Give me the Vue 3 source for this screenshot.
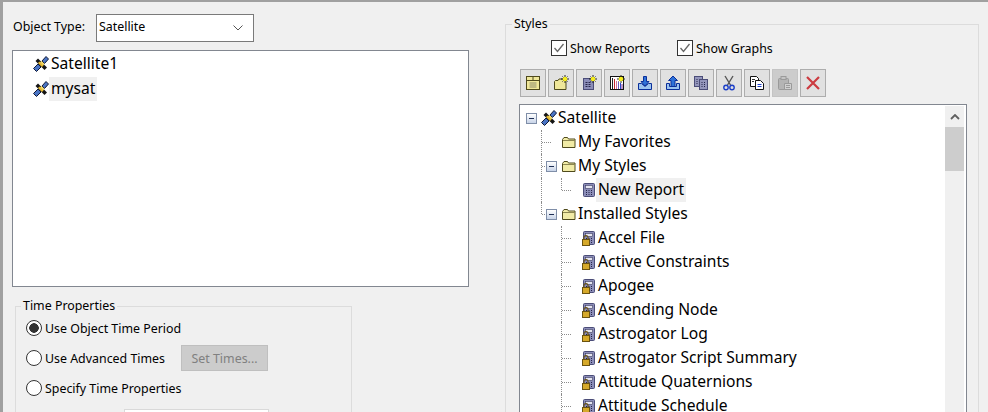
<template>
  <div class="screen">
    <svg class="sprites" aria-hidden="true">
      <defs>
        <symbol id="sat" viewBox="0 0 16 16">
          <path d="M.5 12.500L5 8l3 3-4.500 4.500z" fill="#4a74c4" stroke="#0e1836" stroke-width="1" />
          <path d="M9 5L13 .5l2.500 2.500L11.500 7.500z" fill="#4a74c4" stroke="#0e1836" stroke-width="1" />
          <path d="M5 2.500l9 9-2.500 2.500-9-9z" fill="#141414" />
          <path d="M6.500 5.500l4 4-1.500 1.500-4-4z" fill="#e6b82c" />
          <path d="M8.500 5l3 3-1.500 1.500-3-3z" fill="#f4d860" />
        </symbol>
        <symbol id="folder" viewBox="0 0 16 16">
          <path d="M1.500 13.500v-8l1.500-2h3.500l1 1.500h6.500v8.500z" fill="#f1eba6" stroke="#4f4a1c" />
          <path d="M2 6.500h12" stroke="#8c8650" />
        </symbol>
        <symbol id="report" viewBox="0 0 16 16">
          <rect x="2.500" y="1.500" width="11" height="13" rx="1" fill="#8b8db8" stroke="#4b4d78" />
          <rect x="4.500" y="3.500" width="7" height="3" fill="#e4e4f0" stroke="#3c3c60" stroke-width=".6" />
          <path d="M5 8.500h1M7.500 8.500h1M10 8.500h1M5 10.500h1M7.500 10.500h1M10 10.500h1M5 12.500h1M7.500 12.500h1M10 12.500h1" stroke="#26264a" />
        </symbol>
        <symbol id="locked" viewBox="0 0 16 16">
          <use href="#report" />
          <rect x="1.500" y="9.500" width="7" height="6" fill="#d6a92a" stroke="#6b5310" stroke-width="1" />
          <path d="M3 9.500V7.500a2 2 0 0 1 4 0V9.500" fill="none" stroke="#6b5310" stroke-width="1.100" />
        </symbol>
        <symbol id="star" viewBox="0 0 16 16">
          <path d="M12 0v8M8 4h8M9.500 1.500l5 5M14.500 1.500l-5 5" stroke="#111" stroke-width=".9" />
          <circle cx="12" cy="4" r="2.300" fill="#f6ee1e" />
        </symbol>
        <symbol id="t-note" viewBox="0 0 16 16">
          <rect x="1.500" y="1.500" width="13" height="13" fill="#efe79a" stroke="#4f4a1c" />
          <path d="M1.500 5.500h13M8 1.500v4" stroke="#4f4a1c" />
          <path d="M4.500 8h7M4.500 10h7M4.500 12h7" stroke="#8d8a6a" />
        </symbol>
        <symbol id="t-folder" viewBox="0 0 16 16">
          <path d="M1.500 14.500v-8l1-1h2.500l1-1.500h7v10.500z" fill="#efe79a" stroke="#4f4a1c" />
          <use href="#star" />
        </symbol>
        <symbol id="t-report" viewBox="0 0 16 16">
          <rect x="2.500" y="3.500" width="10" height="11" fill="#8b8db8" stroke="#4b4d78" />
          <path d="M4.500 7.500h2M7.500 7.500h2M4.500 9.500h2M7.500 9.500h2M4.500 11.500h2M7.500 11.500h2" stroke="#26264a" />
          <use href="#star" />
        </symbol>
        <symbol id="t-graph" viewBox="0 0 16 16">
          <rect x="1.500" y="1.500" width="13" height="13" fill="#fff" stroke="#111" />
          <path d="M3.500 3v11" stroke="#222" />
          <path d="M5.500 4v10" stroke="#c2262e" />
          <path d="M7.500 6v8" stroke="#d0709a" />
          <path d="M9.500 7v7" stroke="#6a5fc0" />
          <path d="M11.500 8v6" stroke="#2a46c8" />
          <path d="M13 9v5" stroke="#7a2a90" />
          <use href="#star" />
        </symbol>
        <symbol id="t-in" viewBox="0 0 16 16">
          <path d="M1.500 8.500h3l3.500 3 3.500-3h3v6h-13z" fill="#9cc3ee" stroke="#0b2f9a" />
          <path d="M6.500 1.500h3v5h2.500l-4 4.500-4-4.500h2.500z" fill="#2f72d8" stroke="#0b2f9a" />
        </symbol>
        <symbol id="t-out" viewBox="0 0 16 16">
          <path d="M1.500 8.500h3v3h7v-3h3v6h-13z" fill="#9cc3ee" stroke="#0b2f9a" />
          <path d="M8 1l4.500 4.500H10v6H6v-6H3.500z" fill="#2f72d8" stroke="#0b2f9a" />
        </symbol>
        <symbol id="t-dup" viewBox="0 0 16 16">
          <rect x="1.500" y="1.500" width="8" height="10" fill="#9496bc" stroke="#4b4d78" />
          <rect x="6.500" y="4.500" width="8" height="10" fill="#9496bc" stroke="#4b4d78" />
          <path d="M8.500 7.500h1M11 7.500h1M8.500 9.500h1M11 9.500h1M8.500 11.500h1M11 11.500h1M3.500 4.500h1M3.500 6.500h1M3.500 8.500h1" stroke="#26264a" />
        </symbol>
        <symbol id="t-cut" viewBox="0 0 16 16">
          <path d="M4 1l5.500 9M12 1l-5.500 9" stroke="#555" stroke-width="1.400" fill="none" />
          <circle cx="5" cy="12.500" r="2.200" fill="none" stroke="#1c3fc8" stroke-width="1.400" />
          <circle cx="11" cy="12.500" r="2.200" fill="none" stroke="#1c3fc8" stroke-width="1.400" />
        </symbol>
        <symbol id="t-copy" viewBox="0 0 16 16">
          <path d="M1.500 1.500h6l2 2v8h-8z" fill="#fff" stroke="#111" />
          <path d="M6.500 5.500h5l3 3v6h-8z" fill="#fff" stroke="#111" />
          <path d="M8.500 9.500h4M8.500 11.500h4" stroke="#1c3fc8" />
          <path d="M3 4.500h3M3 6.500h2" stroke="#333" />
        </symbol>
        <symbol id="t-paste" viewBox="0 0 16 16">
          <rect x="1.500" y="3.500" width="10" height="11" rx="1" fill="#b4b4b4" stroke="#9a9a9a" />
          <rect x="4" y="1.500" width="5" height="3" fill="#c4c4c4" stroke="#9a9a9a" />
          <path d="M7.500 8.500h7v6h-7z" fill="#d0d0d0" stroke="#9a9a9a" />
          <path d="M9 10.500h4M9 12.500h4" stroke="#9a9a9a" />
        </symbol>
        <symbol id="t-x" viewBox="0 0 16 16">
          <path d="M2 2l12 12M14 2L2 14" stroke="#cc3b40" stroke-width="2.200" />
        </symbol>
      </defs>
    </svg>

    <section class="left">
      <div class="type-row">
        <label class="type-label">Object Type:</label>
        <div class="select">
          <span>Satellite</span>
          <svg width="10" height="6" viewBox="0 0 10 6"><path d="M.5.500L5 5 9.500.500" fill="none" stroke="#555" /></svg>
        </div>
      </div>

      <ul class="objects">
        <li v-for="item in objects" :key="item.name">
          <svg class="ico"><use href="#sat" /></svg>
          <span class="name" :class="{ hover: item.hover }">{{ item.name }}</span>
        </li>
      </ul>

      <fieldset class="group time">
        <legend>Time Properties</legend>
        <div v-for="opt in timeOptions" :key="opt.label" class="radio-row">
          <span class="radio" :class="{ on: opt.on }"></span>
          <span>{{ opt.label }}</span>
          <button v-if="opt.button" type="button" class="set-times" disabled>{{ opt.button }}</button>
        </div>
        <div class="time-input"></div>
      </fieldset>
    </section>

    <fieldset class="group styles">
      <legend>Styles</legend>
      <div class="checks">
        <label v-for="c in checks" :key="c" class="check">
          <span class="box">
            <svg width="14" height="14" viewBox="0 0 14 14"><path d="M2.500 7l3 3.500 6-7.500" fill="none" stroke="#666" stroke-width="1.300" /></svg>
          </span>
          {{ c }}
        </label>
      </div>

      <div class="toolbar">
        <button v-for="t in tools" :key="t" type="button" class="tool" :class="{ off: t === 't-paste' }">
          <svg width="16" height="16"><use :href="'#' + t" /></svg>
        </button>
      </div>

      <div class="tree">
        <ul class="rows">
          <li v-for="row in rows" :key="row.label" class="row" :class="'d' + row.depth">
            <i v-for="x in row.pass" :key="x" class="pass" :class="'x' + x"></i>
            <i v-if="row.depth" class="elbow" :class="{ end: row.last }"></i>
            <span class="exp">
              <span v-if="row.open" class="minus"></span>
            </span>
            <svg class="ico"><use :href="'#' + row.icon" /></svg>
            <span class="name" :class="{ hover: row.hover }">{{ row.label }}</span>
          </li>
        </ul>
        <div class="scrollbar">
          <div class="arrow">
            <svg width="10" height="6" viewBox="0 0 10 6"><path d="M1 5l4-4 4 4" fill="none" stroke="#606060" stroke-width="1.800" /></svg>
          </div>
          <div class="thumb"></div>
        </div>
      </div>
    </fieldset>
  </div>
</template>

<script setup>
const objects = [
  { name: "Satellite1" },
  { name: "mysat", hover: true }
]

const timeOptions = [
  { label: "Use Object Time Period", on: true },
  { label: "Use Advanced Times", button: "Set Times..." },
  { label: "Specify Time Properties" }
]

const checks = ["Show Reports", "Show Graphs"]

const tools = [
  "t-note", "t-folder", "t-report", "t-graph", "t-in", "t-out",
  "t-dup", "t-cut", "t-copy", "t-paste", "t-x"
]

const installed = [
  "Accel File", "Active Constraints", "Apogee", "Ascending Node", "Astrogator Log",
  "Astrogator Script Summary", "Attitude Quaternions", "Attitude Schedule"
]

const rows = [
  { label: "Satellite", depth: 0, icon: "sat", open: true },
  { label: "My Favorites", depth: 1, icon: "folder" },
  { label: "My Styles", depth: 1, icon: "folder", open: true },
  { label: "New Report", depth: 2, icon: "report", last: true, hover: true, pass: [1] },
  { label: "Installed Styles", depth: 1, icon: "folder", open: true, last: true },
  ...installed.map((label) => ({ label, depth: 2, icon: "locked" }))
]
</script>

<style scoped>
.screen {
  display: flex;
  gap: 36px;
  height: 412px;
  box-sizing: border-box;
  overflow: hidden;
  padding: 12px 9px 0 9px;
  border-top: 2px solid #a0a0a0;
  border-left: 3px solid #a0a0a0;
  background: #f0f0f0;
  color: #000;
  font-family: "Noto Sans", sans-serif;
  font-size: 12.400px;
}
.sprites { position: absolute; width: 0; height: 0; }

.left { width: 457px; flex: none; }
.type-row { display: flex; align-items: center; height: 28px; padding-left: 1px; }
.type-label { width: 83px; padding-bottom: 3px; }
.select {
  display: flex;
  align-items: center;
  justify-content: space-between;
  box-sizing: border-box;
  width: 158px;
  height: 28px;
  padding: 0 10px 3px 2px;
  border: 1px solid #7a7a7a;
  background: #fff;
}
.select svg { margin-top: 3px; }

.objects {
  box-sizing: border-box;
  height: 237px;
  margin: 8px 0 0;
  padding: 0 0 0 20px;
  border: 1px solid #828790;
  background: #fff;
  list-style: none;
  font-size: 15.600px;
}
.objects li { display: flex; align-items: center; height: 25px; }
.ico { flex: none; width: 16px; height: 16px; }
.name { display: flex; align-items: center; box-sizing: border-box; height: 24px; padding: 0 2px 1px; white-space: nowrap; }
.hover { background: #f0f0f0; }

.group { min-width: 0; margin: 0; padding: 0; border: 1px solid #dcdcdc; }
.group legend { padding: 0 2px; margin-left: 6px; line-height: 14px; }

.time { box-sizing: border-box; width: 337px; margin: 12px 0 0 3px; padding: 0 0 0 10px; }
.time legend { margin-left: -5px; }
.radio-row { display: flex; align-items: center; gap: 3px; height: 30px; }
.radio {
  box-sizing: border-box;
  width: 16px;
  height: 16px;
  border: 1px solid #333;
  border-radius: 50%;
  background: #fff;
}
.radio.on { background: radial-gradient(circle, #333 0 4.500px, #fff 5px); }
.set-times {
  width: 87px;
  height: 26px;
  margin-left: 13px;
  border: 1px solid #bfbfbf;
  background: #cccccc;
  color: #808080;
  font: inherit;
}
.time-input { width: 143px; height: 20px; margin: 6px 0 0 98px; border: 1px solid #d9d9d9; background: #fff; }

.styles { flex: none; box-sizing: border-box; width: 474px; height: 420px; margin-top: 3px; padding-left: 13px; }
.styles legend { margin-left: -7px; }
.checks { display: flex; gap: 26px; padding-left: 32px; height: 30px; align-items: center; margin-top: 2px; }
.check { display: flex; align-items: center; gap: 3px; width: 100px; }
.box { display: flex; align-items: center; justify-content: center; box-sizing: border-box; width: 16px; height: 16px; border: 1px solid #333; background: #fff; }

.toolbar { display: flex; gap: 2px; margin-top: 6px; padding-left: 1px; }
.tool {
  display: flex;
  align-items: center;
  justify-content: center;
  box-sizing: border-box;
  width: 26px;
  height: 28px;
  padding: 0;
  border: 1px solid #adadad;
  background: #e1e1e1;
}
.tool.off { background: #cccccc; border-color: #c4c4c4; }

.tree {
  display: flex;
  box-sizing: border-box;
  width: 448px;
  height: 320px;
  margin-top: 7px;
  padding-top: 1px;
  border: 1px solid #828790;
  background: #fff;
}
.rows { flex: 1; margin: 0; padding: 0; list-style: none; font-size: 15.600px; }
.rows .ico { margin-right: -1px; }
.rows .name { padding-bottom: 2px; }
.row { position: relative; display: flex; align-items: center; height: 24px; }
.row.d0 { padding-left: 6px; }
.row.d1 { padding-left: 26px; }
.row.d2 { padding-left: 46px; }
.exp { display: flex; flex: none; width: 15px; }
.minus {
  position: relative;
  box-sizing: border-box;
  width: 11px;
  height: 11px;
  border: 1px solid #7f8ea8;
  background: linear-gradient(#fff, #c8d4e8);
}
.minus::after { content: ""; position: absolute; left: 2px; top: 4px; width: 5px; height: 1px; background: #1f2f55; }

.elbow, .pass { position: absolute; top: 0; height: 24px; border-left: 1px dotted #8c8c8c; }
.elbow.end { height: 12px; }
.elbow::after { content: ""; position: absolute; left: 0; top: 12px; width: 9px; border-top: 1px dotted #8c8c8c; }
.d1 .elbow { left: 21px; }
.d2 .elbow { left: 41px; }
.pass.x1 { left: 21px; }

.scrollbar { flex: none; width: 19px; margin-right: 2px; background: #f0f0f0; }
.arrow { display: flex; align-items: center; justify-content: center; height: 21px; }
.thumb { height: 44px; background: #cdcdcd; }
</style>

<style>
html, body { margin: 0; overflow: hidden; }
</style>
